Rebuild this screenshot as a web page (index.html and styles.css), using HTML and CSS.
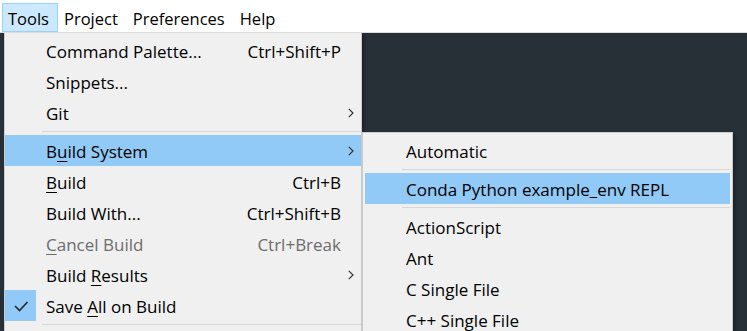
FILE: index.html
```html
<!DOCTYPE html>
<html lang="en">

<head>
    <meta charset="UTF-8">
    <title>Tools menu</title>
    <link rel="stylesheet" href="styles.css">
</head>

<body>
    <div class="menubar">
        <span class="menubar-item active">Tools</span>
        <span class="menubar-item">Project</span>
        <span class="menubar-item">Preferences</span>
        <span class="menubar-item">Help</span>
    </div>
    <div class="workspace">
        <ul class="menu main-menu">
            <li class="item"><span class="check"></span><span class="label">Command Palette...</span><span class="key">Ctrl+Shift+P</span><span class="arrow"></span></li>
            <li class="item"><span class="check"></span><span class="label">Snippets...</span><span class="key"></span><span class="arrow"></span></li>
            <li class="item"><span class="check"></span><span class="label">Git</span><span class="key"></span><span class="arrow"><svg width="6" height="10" viewBox="0 0 6 10"><path d="M0.8 0.8 L5 5 L0.8 9.2" fill="none" stroke="#333" stroke-width="1.2"/></svg></span></li>
            <li class="sep"></li>
            <li class="item hover"><span class="check"></span><span class="label">B<u>u</u>ild System</span><span class="key"></span><span class="arrow"><svg width="6" height="10" viewBox="0 0 6 10"><path d="M0.8 0.8 L5 5 L0.8 9.2" fill="none" stroke="#333" stroke-width="1.2"/></svg></span></li>
            <li class="item"><span class="check"></span><span class="label"><u>B</u>uild</span><span class="key">Ctrl+B</span><span class="arrow"></span></li>
            <li class="item"><span class="check"></span><span class="label">Build With...</span><span class="key">Ctrl+Shift+B</span><span class="arrow"></span></li>
            <li class="item disabled"><span class="check"></span><span class="label"><u>C</u>ancel Build</span><span class="key">Ctrl+Break</span><span class="arrow"></span></li>
            <li class="item"><span class="check"></span><span class="label">Build <u>R</u>esults</span><span class="key"></span><span class="arrow"><svg width="6" height="10" viewBox="0 0 6 10"><path d="M0.8 0.8 L5 5 L0.8 9.2" fill="none" stroke="#333" stroke-width="1.2"/></svg></span></li>
            <li class="item"><span class="check on"><svg width="31" height="31" viewBox="0 0 31 31"><path d="M10 16 L14.5 20.5 L22.5 12" fill="none" stroke="#2b2b2b" stroke-width="1.7"/></svg></span><span class="label">Save <u>A</u>ll on Build</span><span class="key"></span><span class="arrow"></span></li>
            <li class="sep"></li>
        </ul>

        <ul class="menu sub-menu">
            <li class="item"><span class="check"></span><span class="label">Automatic</span></li>
            <li class="sep"></li>
            <li class="item hover"><span class="check"></span><span class="label">Conda Python example_env REPL</span></li>
            <li class="sep"></li>
            <li class="item"><span class="check"></span><span class="label">ActionScript</span></li>
            <li class="item"><span class="check"></span><span class="label">Ant</span></li>
            <li class="item"><span class="check"></span><span class="label">C Single File</span></li>
            <li class="item"><span class="check"></span><span class="label">C++ Single File</span></li>
        </ul>
    </div>
</body>

</html>
```

FILE: styles.css
```css
* {
    padding: 0px;
    margin: 0px;
    box-sizing: border-box;
}

body {
    width: 747px;
    height: 331px;
    overflow: hidden;
    background-color: #283037;
    font-family: "Open Sans", "Noto Sans", sans-serif;
    font-size: 17px;
    color: #000;
}

.menubar {
    height: 33px;
    background-color: #fff;
    border-bottom: 1px solid #dcdcdc;
    display: flex;
    padding: 3px 0 0 2px;
    font-size: 16.5px;
}

.menubar-item {
    display: flex;
    align-items: center;
    padding: 1px 8px 0 5px;
    border: 1px solid transparent;
}

.menubar-item.active {
    background-color: #cce8ff;
    border-color: #99d1ff;
}

.workspace {
    position: relative;
    height: 298px;
    overflow: hidden;
}

.menu {
    list-style: none;
    position: absolute;
    background-color: #f0f0f0;
    border: 1px solid #cccccc;
    box-shadow: 2px 2px 3px rgba(0, 0, 0, 0.35);
}

.main-menu {
    left: 4px;
    top: -1px;
    width: 358px;
    height: 320px;
    padding: 2px 0 0 0;
}

.sub-menu {
    left: 362px;
    top: 99px;
    width: 371px;
    height: 220px;
    padding: 2px 2px 0 2px;
}

.item {
    height: 31px;
    display: grid;
    grid-template-columns: 41px 1fr auto 20px;
    align-items: center;
    white-space: nowrap;
}

.sub-menu .item {
    grid-template-columns: 41px 1fr;
}

.item.hover {
    background-color: #91c9f7;
}

.item.disabled {
    color: #6d6d6d;
}

.check {
    width: 31px;
    height: 31px;
    display: flex;
}

.check.on {
    background-color: #91c9f7;
}

.label {
    padding-top: 2px;
}

.label u {
    text-underline-offset: 3px;
}

.key {
    text-align: right;
    padding-top: 2px;
}

.arrow {
    display: flex;
    justify-content: flex-end;
    padding-right: 7px;
}

.sep {
    height: 7px;
    margin-left: 37px;
    padding-top: 3px;
}

.sep::after {
    content: "";
    display: block;
    height: 1px;
    background-color: #d7d7d7;
}
```
